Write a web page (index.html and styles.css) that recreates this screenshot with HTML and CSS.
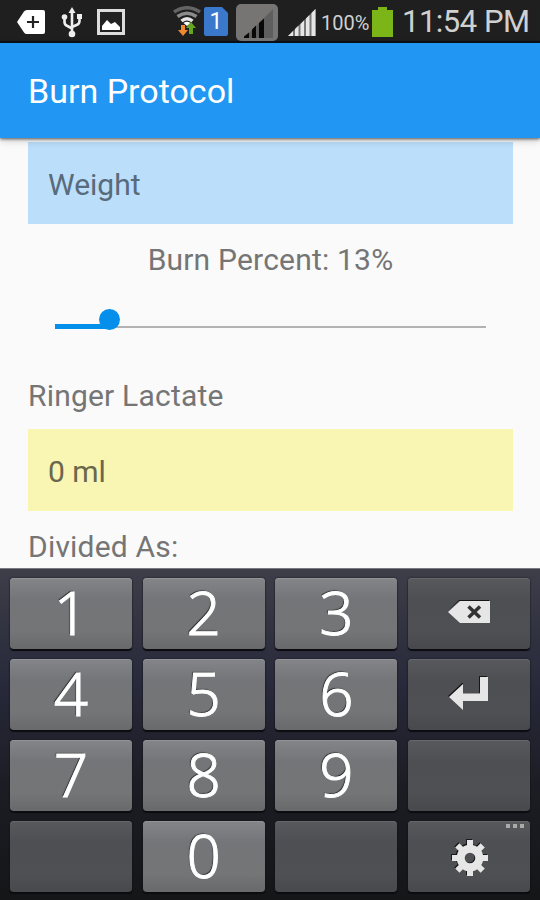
FILE: index.html
```html
<!DOCTYPE html>
<html lang="en">
<head>
    <meta charset="UTF-8">
    <meta name="viewport" content="width=device-width, initial-scale=1.0">
    <title>Burn Protocol</title>
    <link rel="stylesheet" href="styles.css">
</head>
<body>
    <div class="status-bar">
        <svg class="icon-plus" width="30" height="26" viewBox="0 0 30 26">
            <path d="M1 13 8 2.500Q9 1 11 1H27Q29 1 29 3V23Q29 25 27 25H11Q9 25 8 23.500Z" fill="#fff"/>
            <path d="M11 13H23M17 7V19" stroke="#222" stroke-width="2.200"/>
        </svg>
        <svg class="icon-usb" width="22" height="32" viewBox="0 0 22 32">
            <path d="M11 5V27M3.500 13V16Q3.500 19 6.500 20L11 22.500M18.500 11V15Q18.500 18 15.500 19L11 21" fill="none" stroke="#eee" stroke-width="2.600"/>
            <path d="M11 1 14.500 7H7.500Z" fill="#eee"/>
            <circle cx="3.500" cy="11" r="2.800" fill="#eee"/>
            <path d="M16 8H21V13H16Z" fill="#eee"/>
            <circle cx="11" cy="28" r="3.300" fill="#eee"/>
        </svg>
        <svg class="icon-picture" width="28" height="26" viewBox="0 0 28 26">
            <rect x="1.500" y="1.500" width="25" height="23" fill="#222" stroke="#ddd" stroke-width="3"/>
            <path d="M5 21V17L10 11 14 15 18 13 23 18V21Z" fill="#fff"/>
        </svg>
        <svg class="icon-wifi" width="30" height="30" viewBox="0 0 30 30">
            <g fill="none" stroke-width="3.500">
                <path d="M2 6Q15 -2.500 28 6" stroke="#646464"/>
                <path d="M5.500 10.500Q15 4 24.500 10.500" stroke="#8c8c8c"/>
                <path d="M9.500 15Q15 10.500 20.500 15" stroke="#e4e4e4"/>
            </g>
            <path d="M11.500 17Q15 14.500 18.500 17L15 20Z" fill="#fff"/>
            <path d="M9 19H13V24H16L11 30 6 24H9Z" fill="#ed8a32"/>
            <path d="M17 28V22H14L19 16 24 22H21V28Z" fill="#65a51f"/>
        </svg>
        <svg class="icon-sim" width="24" height="30" viewBox="0 0 24 30">
            <path d="M0 2Q0 0 2 0H18L24 6V27Q24 29 22 29H2Q0 29 0 27Z" fill="#3978cb"/>
            <text x="12" y="22" class="sim-number">1</text>
        </svg>
        <svg class="icon-signal-off" width="42" height="37" viewBox="0 0 42 37">
            <rect width="42" height="37" rx="5" fill="#767573"/>
            <path d="M8 34 37 5V34Z" fill="#5e5e5e"/>
            <path d="M8 34V32.500L13 28.500V34ZM16 34V25.500L20 21.500V34ZM23 34V19L28 14.500V34Z" fill="#080808"/>
        </svg>
        <svg class="icon-signal" width="28" height="28" viewBox="0 0 28 28">
            <path d="M0 27 27.500 0V27Z" fill="#777"/>
            <path d="M0 27 5 22V27ZM7 27V20L10.500 16.500V27ZM12.500 27V15L16 11.500V27ZM18 27V9.500L21.500 6V27ZM23.500 27V4L27.500 0V27Z" fill="#e6e6e6"/>
        </svg>
        <span class="battery-text">100%</span>
        <svg class="icon-battery" width="22" height="30" viewBox="0 0 22 30">
            <path d="M0 3H6V0H15V3H21V30H0Z" fill="#7cb518"/>
        </svg>
        <span class="clock">11:54 PM</span>
    </div>

    <header class="app-bar">
        <h1>Burn Protocol</h1>
    </header>

    <main class="content">
        <div class="field weight">Weight</div>
        <div class="label burn">Burn Percent: 13%</div>
        <div class="slider">
            <div class="slider-fill" style="width: 13%"></div>
            <div class="slider-thumb"></div>
        </div>
        <div class="label ringer">Ringer Lactate</div>
        <div class="field result">0 ml</div>
        <div class="label divided">Divided As:</div>
    </main>

    <div class="keyboard">
        <button class="key">1</button>
        <button class="key">2</button>
        <button class="key">3</button>
        <button class="key dark" aria-label="Delete">
            <svg width="44" height="24" viewBox="0 0 44 24">
                <path d="M0 11.500 12 0H42V1L12 1Z" fill="#161616"/>
                <path d="M1 12 13 1H43V23H13Z" fill="#e6e6e6"/>
                <path d="M21.500 6.500 33 17.500M33 6.500 21.500 17.500" stroke="#333" stroke-width="3.500"/>
            </svg>
        </button>
        <button class="key">4</button>
        <button class="key">5</button>
        <button class="key">6</button>
        <button class="key dark" aria-label="Enter">
            <svg width="42" height="36" viewBox="0 0 42 36">
                <path d="M0 21 14 8H15V10L1 22ZM31 1H39V2H32V18H31Z" fill="#161616"/>
                <path d="M1 22 15 9V18.500H32V2H40V26H15V35Z" fill="#e6e6e6"/>
            </svg>
        </button>
        <button class="key">7</button>
        <button class="key">8</button>
        <button class="key">9</button>
        <button class="key dark"></button>
        <button class="key dark"></button>
        <button class="key">0</button>
        <button class="key dark"></button>
        <button class="key dark settings" aria-label="Settings">
            <svg width="38" height="38" viewBox="-20 -20 38 38">
                <g fill="none" stroke="#191919" transform="translate(-1 -1)">
                    <circle r="9.500" stroke-width="8"/>
                    <path d="M0 -18V-11M0 11V18M-18 0H-11M11 0H18M-12.700 -12.700-8 -8M8 8 12.700 12.700M-12.700 12.700-8 8M8 -8 12.700 -12.700" stroke-width="6"/>
                </g>
                <g fill="none" stroke="#e6e6e6">
                    <circle r="9.300" stroke-width="8"/>
                    <path d="M0 -18V-11M0 11V18M-18 0H-11M11 0H18M-12.700 -12.700-8 -8M8 8 12.700 12.700M-12.700 12.700-8 8M8 -8 12.700 -12.700" stroke-width="6"/>
                </g>
            </svg>
            <svg class="dots" width="18" height="4" viewBox="0 0 18 4">
                <path d="M0 0H4V4H0ZM7 0H11V4H7ZM14 0H18V4H14Z" fill="#aaa"/>
            </svg>
        </button>
    </div>
</body>
</html>
```
FILE: styles.css
```css
* {
    box-sizing: border-box;
}

body {
    font-family: Roboto, "Liberation Sans", sans-serif;
    margin: 0;
    height: 900px;
    display: flex;
    flex-direction: column;
    background-color: #fafafa;
    color: #757575;
    overflow: hidden;
}

.status-bar {
    height: 43px;
    flex: none;
    display: flex;
    align-items: flex-start;
    background-color: #1f1f1f;
    border-bottom: 2px solid #0b1119;
    color: #d0d0d0;
    white-space: nowrap;
}

.status-bar svg {
    flex: none;
}

.icon-plus {
    margin: 9px 0 0 16px;
}

.icon-usb {
    margin: 6px 0 0 15px;
}

.icon-picture {
    margin: 9px 0 0 14px;
}

.icon-wifi {
    margin: 6px 0 0 47px;
}

.icon-sim {
    margin: 7px 0 0 2px;
}

.sim-number {
    font: 23px Roboto, sans-serif;
    text-anchor: middle;
    fill: #fff;
}

.icon-signal-off {
    margin: 4px 0 0 8px;
}

.icon-signal {
    margin: 9px 0 0 10px;
}

.battery-text {
    width: 49px;
    margin: 11px 0 0 5px;
    font-size: 20px;
    line-height: 24px;
}

.icon-battery {
    margin: 7px 0 0 2px;
}

.clock {
    margin: 3px 0 0 8px;
    font-size: 31px;
    line-height: 37px;
    letter-spacing: -0.5px;
}

.app-bar {
    height: 95px;
    flex: none;
    padding: 29px 27px 0 28px;
    background-color: #2196f3;
    color: white;
    box-shadow: 0 1px 3px rgba(0, 0, 0, 0.6), 0 3px 8px rgba(0, 0, 0, 0.16);
    z-index: 1;
}

h1 {
    margin: 0;
    font-size: 34px;
    font-weight: 400;
    line-height: 38px;
}

.content {
    height: 430px;
    flex: none;
    padding: 4px 27px 0 28px;
    font-size: 30px;
    line-height: 36px;
}

.label {
    letter-spacing: 0.2px;
}

.field {
    height: 82px;
    padding: 25px 20px 0;
}

.weight {
    background-color: #bbdefb;
    color: #586b7a;
}

.burn {
    margin-top: 18px;
    text-align: center;
}

.slider {
    position: relative;
    height: 20px;
    margin: 31px 27px 0;
    background: linear-gradient(#b2b2b2, #b2b2b2) 0 17px / 100% 2px no-repeat;
}

.slider-fill {
    height: 5px;
    transform: translateY(15px);
    background-color: #0490ea;
}

.slider-thumb {
    position: absolute;
    top: 0;
    left: 44px;
    width: 21px;
    height: 21px;
    border-radius: 50%;
    background-color: #0490ea;
}

.ringer {
    margin-top: 49px;
}

.result {
    margin-top: 15px;
    background-color: #f9f5b2;
    color: #69674d;
}

.divided {
    margin-top: 18px;
}

.keyboard {
    height: 332px;
    flex: none;
    display: grid;
    grid-template-columns: repeat(4, 1fr);
    grid-template-rows: repeat(4, 70.500px);
    gap: 10.500px 10.700px;
    padding: 9px 10px;
    background: linear-gradient(#3d3e48, #28293a 35%, #1c1d24 65%, #151618);
    border-top: 1px solid #777880;
    z-index: 2;
}

.key {
    display: flex;
    align-items: center;
    justify-content: center;
    padding: 0 0 2px;
    border: none;
    border-radius: 4px;
    background: linear-gradient(#848588, #747578 30%, #747577 75%, #68696b);
    box-shadow: 0 2px 1px #0b0b10, 0 0 2px #15151c, inset 0 1px 0 #929397;
    color: white;
    font: 300 60px "Noto Sans", sans-serif;
    line-height: 68px;
    text-shadow: -1px -1px 1px #222;
    -webkit-text-stroke: 1px white;
}

.dark {
    background: linear-gradient(#58595d, #4e4f53 30%, #4f5053 75%, #48494c);
    box-shadow: 0 2px 1px #0b0b10, 0 0 2px #15151c, inset 0 1px 0 #66676b;
}

.settings {
    position: relative;
    padding: 1px 0 0;
}

.dots {
    position: absolute;
    top: 3px;
    right: 6px;
}
```
